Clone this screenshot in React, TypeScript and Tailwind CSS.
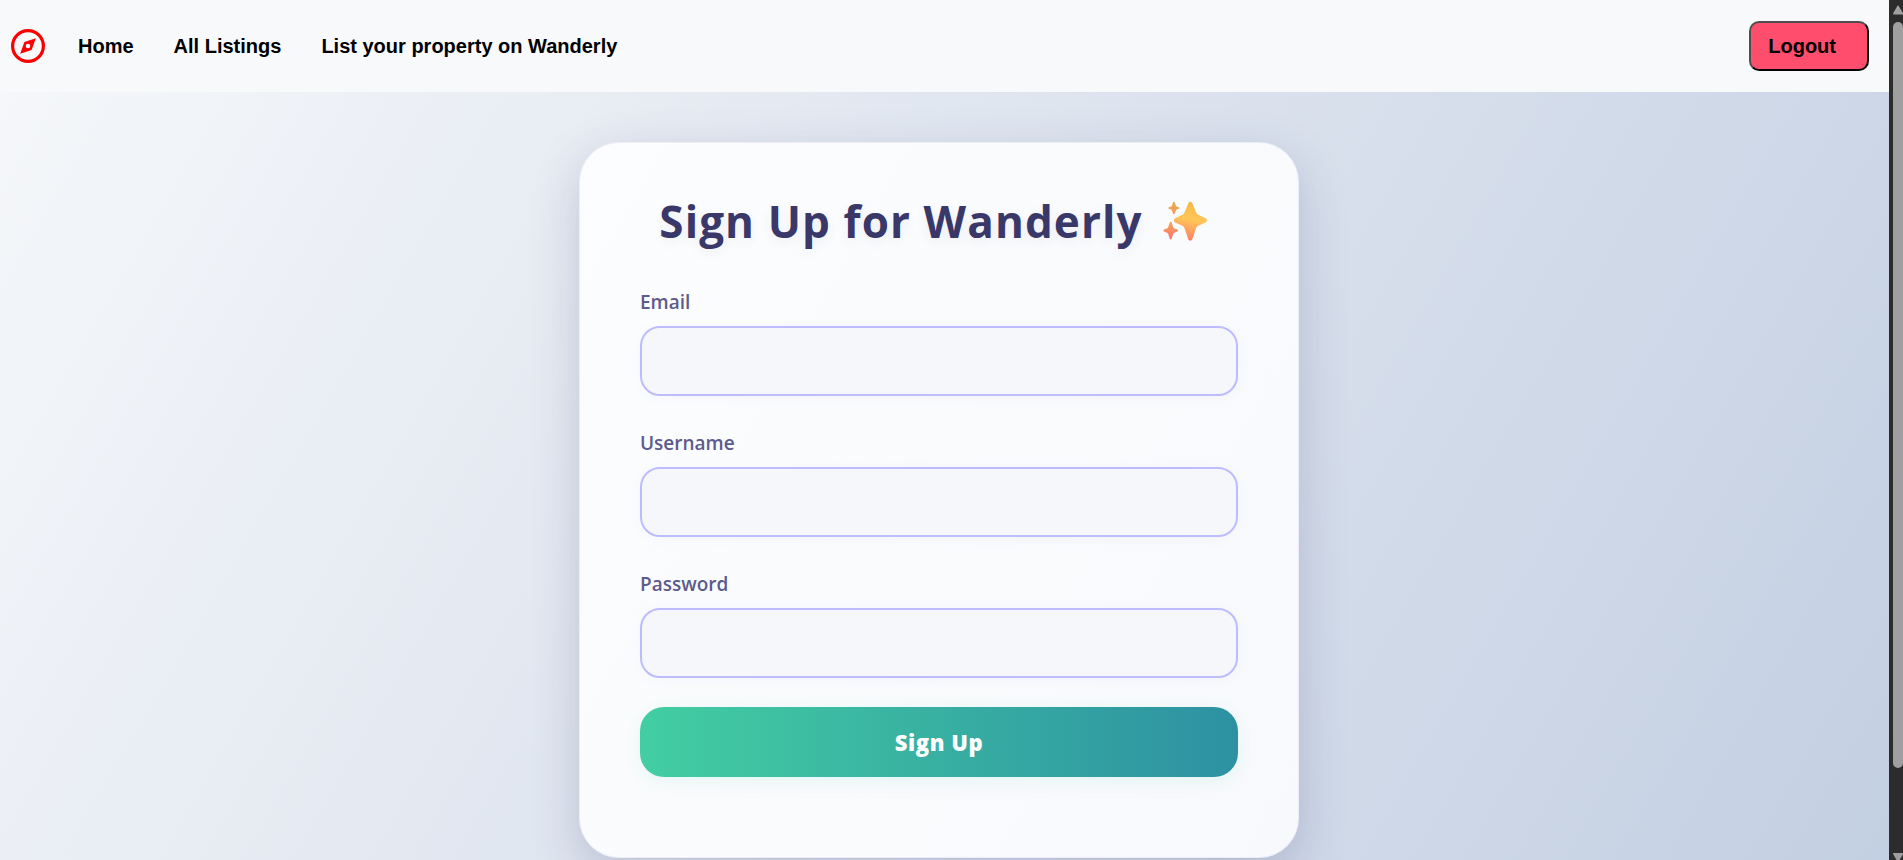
import { useState } from "react";

const navLinks = ["Home", "All Listings", "List your property on Wanderly"];

const fields = [
  { id: "email", label: "Email", type: "email" },
  { id: "username", label: "Username", type: "text" },
  { id: "password", label: "Password", type: "password" },
];

function Compass() {
  return (
    <svg viewBox="0 0 34 34" className="size-[34px]" aria-hidden="true">
      <circle cx="17" cy="17" r="15.400" fill="none" stroke="#ff0000" strokeWidth="3.200" />
      <path
        fill="#ff0000"
        fillRule="evenodd"
        d="M24.800 9.200 20.600 21 9.200 24.800 13.400 13ZM17 14.700A2.300 2.300 0 1 0 17 19.300A2.300 2.300 0 1 0 17 14.700Z"
      />
    </svg>
  );
}

function Sparkles() {
  return (
    <svg viewBox="0 0 44 40" className="h-10 w-11" role="img" aria-label="sparkles">
      <defs>
        <linearGradient id="spark" x1="0.600" y1="0" x2="0.400" y2="1">
          <stop offset="0" stopColor="#f3b944" />
          <stop offset="0.450" stopColor="#ffc658" />
          <stop offset="0.700" stopColor="#ffa560" />
          <stop offset="1" stopColor="#ff7a66" />
        </linearGradient>
        <linearGradient id="sparkTop" x1="0" y1="0" x2="0" y2="1">
          <stop offset="0" stopColor="#dfae4c" />
          <stop offset="1" stopColor="#f79a5e" />
        </linearGradient>
        <linearGradient id="sparkLow" x1="0" y1="0" x2="0" y2="1">
          <stop offset="0" stopColor="#f2a354" />
          <stop offset="1" stopColor="#ff7572" />
        </linearGradient>
      </defs>
      <path
        fill="url(#spark)"
        d="M25.200 2.400C25.900 0.300 28.700 0.300 29.400 2.400L32.800 10.800C33.400 12.400 34.200 13.400 35.800 14L42.500 17.200C44.300 18 44.300 20.600 42.500 21.400L35.800 24.500C34.200 25.200 33.400 26.200 32.800 27.900L29.400 38C28.700 40.200 25.900 40.200 25.200 38L21.800 27.900C21.200 26.200 20.400 25.200 18.800 24.500L12.100 21.400C10.300 20.600 10.300 18 12.100 17.200L18.800 14C20.400 13.400 21.200 12.400 21.800 10.800Z"
      />
      <path
        fill="url(#sparkTop)"
        d="M10 1.500C10.300.6 11.500.6 11.800 1.500L12.800 4.400C13 5 13.300 5.300 13.900 5.500L15.900 6.300C16.700 6.600 16.700 7.500 15.900 7.800L13.900 8.600C13.300 8.800 13 9.100 12.800 9.700L11.800 12.600C11.500 13.500 10.300 13.500 10 12.600L9 9.700C8.800 9.100 8.500 8.800 7.900 8.600L5.900 7.800C5.100 7.500 5.100 6.600 5.900 6.300L7.900 5.500C8.500 5.300 8.800 5 9 4.400Z"
      />
      <path
        fill="url(#sparkLow)"
        d="M6.700 21.500C7 20.500 8.400 20.500 8.700 21.500L10.100 26C10.300 26.800 10.800 27.200 11.500 27.500L14.300 28.600C15.300 29 15.300 30.200 14.300 30.600L11.500 31.700C10.800 32 10.300 32.400 10.100 33.200L8.700 37.700C8.400 38.700 7 38.700 6.700 37.700L5.300 33.200C5.100 32.400 4.600 32 3.900 31.700L1.100 30.600C.1 30.200 .1 29 1.100 28.600L3.900 27.500C4.600 27.200 5.100 26.800 5.300 26Z"
      />
    </svg>
  );
}

function Scrollbar() {
  return (
    <div aria-hidden="true" className="flex w-[14px] shrink-0 flex-col items-end bg-[#2c2c2c]">
      <svg viewBox="0 0 10 22" className="h-[22px] w-[10px] shrink-0">
        <path d="M5 6.300 9.300 13.700H.9Z" fill="#9f9f9f" stroke="#9f9f9f" strokeWidth="1.600" strokeLinejoin="round" />
      </svg>
      <div className="w-[10px] grow rounded-full bg-[#9f9f9f]" />
      <div className="flex h-[92px] shrink-0 items-end">
        <svg viewBox="0 0 10 8" className="h-2 w-[10px]">
          <path d="M5 9 .9 1.800H9.300Z" fill="#9f9f9f" stroke="#9f9f9f" strokeWidth="1.600" strokeLinejoin="round" />
        </svg>
      </div>
    </div>
  );
}

function Header() {
  return (
    <header className="flex h-[92px] shrink-0 items-center justify-between bg-[#f8f9fb] pr-5 pl-[11px] font-['Liberation_Sans',Arial,sans-serif] text-xl font-bold text-black">
      <nav className="flex items-center">
        <a href="#" aria-label="Wanderly" className="mr-[33px]">
          <Compass />
        </a>
        <div className="flex gap-10">
          {navLinks.map((link) => (
            <a key={link} href="#">
              {link}
            </a>
          ))}
        </div>
      </nav>
      <button
        type="button"
        className="h-[50px] rounded-[10px] border-2 border-t-[#4f4f4f] border-r-black border-b-black border-l-[#4f4f4f] bg-[#ff4d6d] pr-[31px] pl-[17px]"
      >
        Logout
      </button>
    </header>
  );
}

function SignUpCard() {
  const [values, setValues] = useState<Record<string, string>>({});

  return (
    <form
      onSubmit={(event) => event.preventDefault()}
      className="w-full max-w-[720px] rounded-[40px] border border-[#ececfa] bg-[linear-gradient(120deg,#fcfdfe,#f8f9fc)] px-[60px] pt-12 pb-20 shadow-[0_16px_48px_rgba(60,60,110,0.22)]"
    >
      <h1 className="mb-9 flex items-center justify-center gap-5 pr-3 text-[44px] leading-[60px] font-bold tracking-wide whitespace-nowrap text-[#3a3769] [text-shadow:0_4px_12px_rgba(58,55,105,0.07)]">
        Sign Up for Wanderly
        <Sparkles />
      </h1>
      <div className="flex flex-col gap-8">
        {fields.map((field) => (
          <div key={field.id} className="flex flex-col gap-[9px]">
            <label htmlFor={field.id} className="text-[19px] leading-[30px] font-semibold text-[#5d5a8d]">
              {field.label}
            </label>
            <input
              id={field.id}
              type={field.type}
              value={values[field.id] ?? ""}
              onChange={(event) => setValues({ ...values, [field.id]: event.target.value })}
              className="h-[70px] w-full rounded-[20px] border-2 border-[#bdbdfd] bg-[#f6f7fb] px-6 text-xl shadow-[0_2px_12px_rgba(160,160,255,0.06)] outline-none focus:border-[#8f8cf0]"
            />
          </div>
        ))}
      </div>
      <button
        type="submit"
        className="mt-[29px] h-[70px] w-full rounded-[24px] bg-[linear-gradient(90deg,#43cea2,#2d91a2)] text-[22px] font-extrabold tracking-wide text-white shadow-[0_4px_18px_rgba(67,206,162,0.12)]"
      >
        Sign Up
      </button>
    </form>
  );
}

export default function App() {
  return (
    <div className="flex h-screen overflow-hidden">
      <div className="flex min-w-0 grow flex-col">
        <Header />
        <main className="flex grow items-start justify-center overflow-hidden bg-[linear-gradient(120deg,#f5f7fa,#c3cfe2)] pt-[50px] pr-[11px] font-['Open_Sans','Noto_Sans',sans-serif]">
          <SignUpCard />
        </main>
      </div>
      <Scrollbar />
    </div>
  );
}
